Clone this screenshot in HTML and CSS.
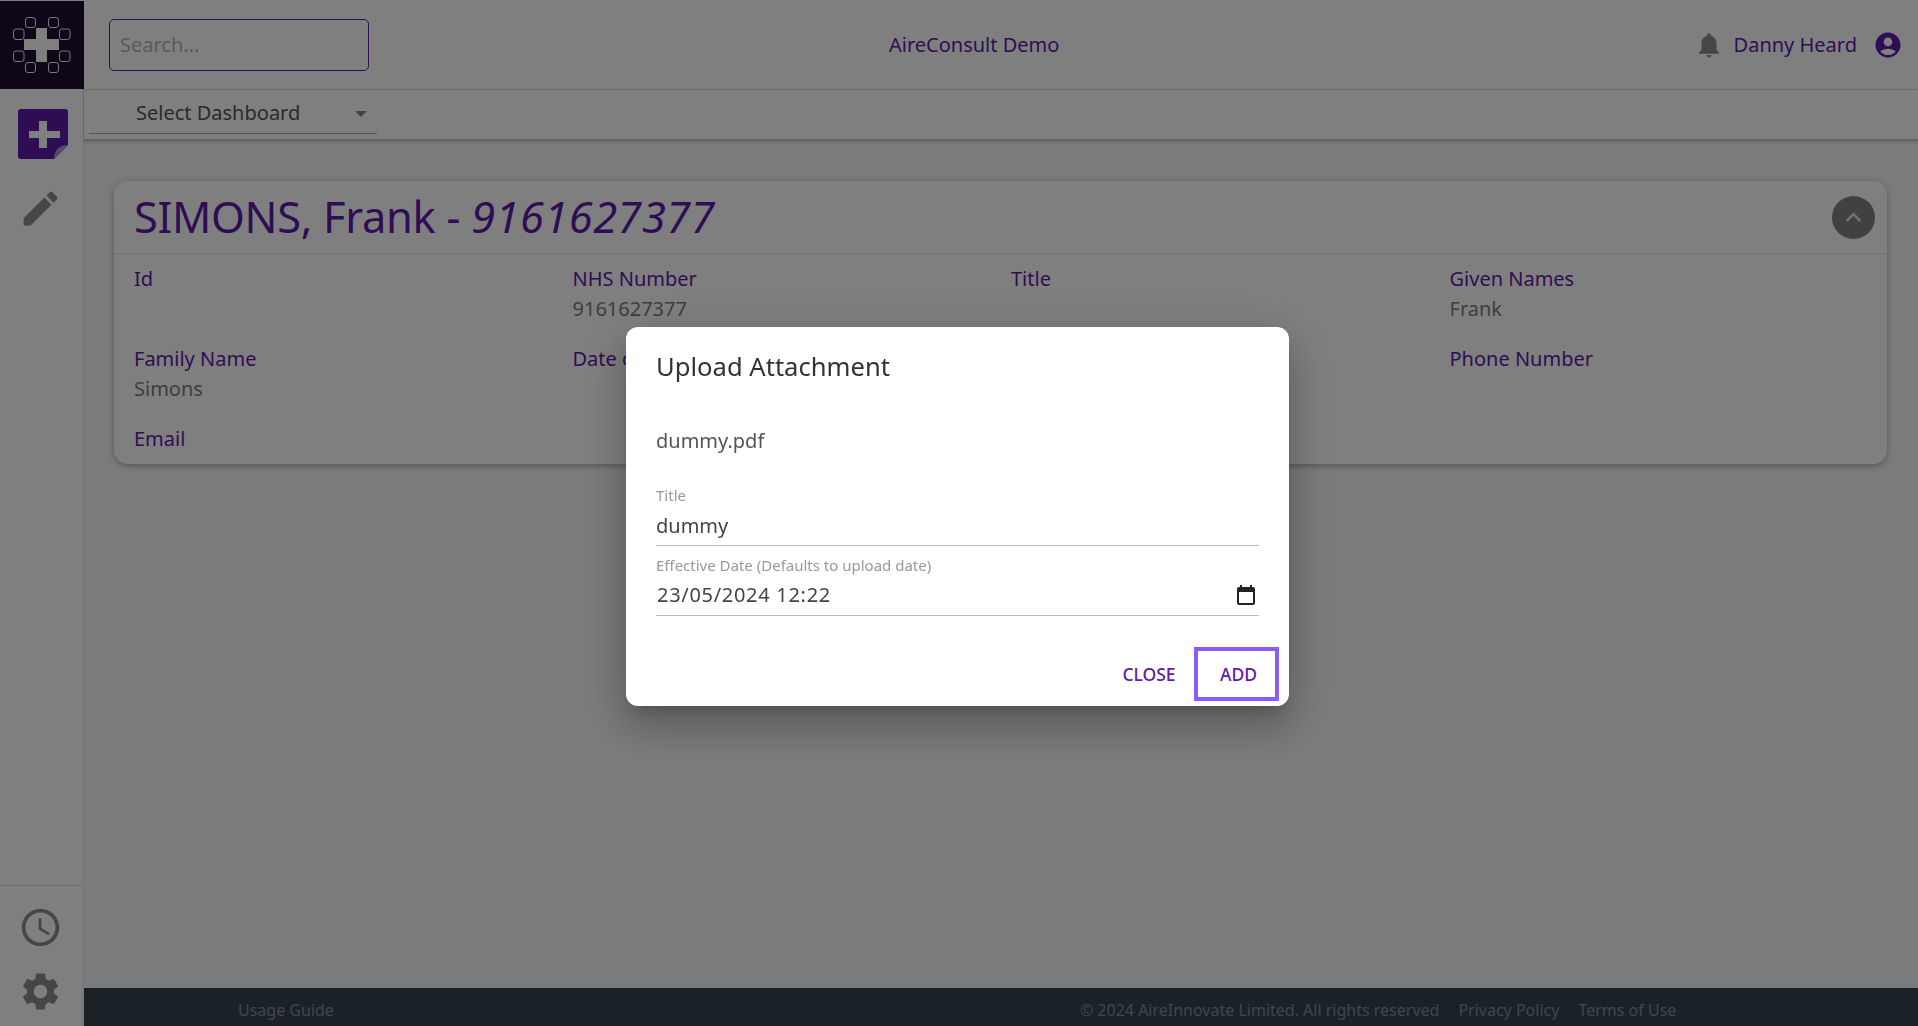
FILE: index.html
```html
<!DOCTYPE html>
<html lang="en">
<head>
<meta charset="utf-8">
<title>AireConsult Demo</title>
<link rel="stylesheet" href="styles.css">
</head>
<body>
<div class="app">
  <aside class="sidebar">
    <div class="logo">
      <svg width="84" height="88" viewBox="0 0 84 88">
        <g fill="none" stroke="#fff" stroke-width="1" stroke-opacity=".95">
          <rect x="25.5" y="16.5" width="10" height="10" rx="2.5"/>
          <rect x="48.5" y="16.5" width="10" height="10" rx="2.5"/>
          <rect x="13.5" y="28" width="10.5" height="10.5" rx="2.5"/>
          <rect x="59.5" y="28" width="10.5" height="10.5" rx="2.5"/>
          <rect x="13.5" y="50" width="10.5" height="10.5" rx="2.5"/>
          <rect x="59.5" y="50" width="10.5" height="10.5" rx="2.5"/>
          <rect x="25.5" y="61.5" width="10" height="10" rx="2.5"/>
          <rect x="48.5" y="61.5" width="10" height="10" rx="2.5"/>
        </g>
        <path fill="#fff" d="M36 27h11v11h12v11H47v12H36V49H24V38h12z"/>
      </svg>
    </div>
    <div class="side-top">
      <svg class="add-icon" width="50" height="50" viewBox="0 0 50 50">
        <path fill="#5f1aa8" d="M3 0h44a3 3 0 0 1 3 3v33L36 50H3a3 3 0 0 1-3-3V3a3 3 0 0 1 3-3z"/>
        <path fill="#fff" d="M21 12h8v10h13v7H29v10h-8V29H11v-7h10z"/>
        <path fill="#b48fe0" d="M36 50c0-9 5-14 14-14z"/>
      </svg>
      <svg class="side-icon" viewBox="0 0 24 24"><path d="M3 17.25V21h3.75L17.81 9.94l-3.75-3.75L3 17.25zM20.71 7.04c.39-.39.39-1.02 0-1.41l-2.34-2.34a.9959.9959 0 0 0-1.41 0l-1.83 1.83 3.75 3.75 1.83-1.83z"/></svg>
    </div>
    <div class="side-bottom">
      <svg class="side-icon" viewBox="0 0 24 24"><path d="M11.99 2C6.47 2 2 6.48 2 12s4.47 10 9.99 10C17.52 22 22 17.52 22 12S17.52 2 11.99 2zM12 20c-4.42 0-8-3.58-8-8s3.58-8 8-8 8 3.58 8 8-3.58 8-8 8zm.5-13H11v6l5.25 3.15.75-1.23-4.5-2.67z"/></svg>
      <svg class="side-icon" viewBox="0 0 24 24"><path d="M19.14 12.94c.04-.3.06-.61.06-.94 0-.32-.02-.64-.07-.94l2.03-1.58c.18-.14.23-.41.12-.61l-1.92-3.32c-.12-.22-.37-.29-.59-.22l-2.39.96c-.5-.38-1.03-.7-1.62-.94l-.36-2.54c-.04-.24-.24-.41-.48-.41h-3.84c-.24 0-.43.17-.47.41l-.36 2.54c-.59.24-1.13.57-1.62.94l-2.39-.96c-.22-.08-.47 0-.59.22L2.74 8.87c-.12.21-.08.47.12.61l2.03 1.58c-.05.3-.09.63-.09.94s.02.64.07.94l-2.03 1.58c-.18.14-.23.41-.12.61l1.92 3.32c.12.22.37.29.59.22l2.39-.96c.5.38 1.03.7 1.62.94l.36 2.54c.05.24.24.41.48.41h3.84c.24 0 .44-.17.47-.41l.36-2.54c.59-.24 1.13-.56 1.62-.94l2.39.96c.22.08.47 0 .59-.22l1.92-3.32c.12-.22.07-.47-.12-.61l-2.01-1.58zM12 15.6c-1.98 0-3.6-1.62-3.6-3.6s1.62-3.6 3.6-3.6 3.6 1.62 3.6 3.6-1.62 3.6-3.6 3.6z"/></svg>
    </div>
  </aside>
  <div class="content">
    <header class="topbar">
      <div class="search">Search...</div>
      <div class="app-title">AireConsult Demo</div>
      <div class="user">
        <svg class="bell" viewBox="0 0 24 24"><path d="M12 22c1.1 0 2-.9 2-2h-4c0 1.1.89 2 2 2zm6-6v-5c0-3.07-1.64-5.64-4.5-6.32V4c0-.83-.67-1.5-1.5-1.5s-1.5.67-1.5 1.5v.68C7.63 5.36 6 7.92 6 11v5l-2 2v1h16v-1l-2-2z"/></svg>
        <span class="user-name">Danny Heard</span>
        <svg class="avatar" viewBox="0 0 24 24"><path d="M12 2C6.48 2 2 6.48 2 12s4.48 10 10 10 10-4.48 10-10S17.52 2 12 2zm0 4c1.93 0 3.5 1.57 3.5 3.5S13.93 13 12 13s-3.5-1.57-3.5-3.5S10.07 6 12 6zm0 14c-2.03 0-4.43-.82-6.14-2.88C7.55 15.8 9.68 15 12 15s4.45.8 6.14 2.12C16.43 19.18 14.03 20 12 20z"/></svg>
      </div>
    </header>
    <div class="dashbar">
      <div class="select">
        <span class="select-text">Select Dashboard</span>
        <span class="select-arrow"></span>
      </div>
    </div>
    <main class="main">
      <section class="card">
        <div class="card-head">
          <h1 class="patient">SIMONS, Frank - <em>9161627377</em></h1>
          <button class="collapse" type="button" aria-label="Collapse">
            <svg viewBox="0 0 24 24"><path d="M12 8l-6 6 1.41 1.41L12 10.83l4.59 4.58L18 14z"/></svg>
          </button>
        </div>
        <div class="fields">
          <div class="field"><div class="label">Id</div></div>
          <div class="field"><div class="label">NHS Number</div><div class="value">9161627377</div></div>
          <div class="field"><div class="label">Title</div></div>
          <div class="field"><div class="label">Given Names</div><div class="value">Frank</div></div>
          <div class="field"><div class="label">Family Name</div><div class="value">Simons</div></div>
          <div class="field field-clip"><div class="label">Date of Birth</div></div>
          <div class="field"></div>
          <div class="field"><div class="label">Phone Number</div></div>
          <div class="field"><div class="label">Email</div></div>
        </div>
      </section>
    </main>
    <footer class="footer">
      <a class="foot-guide">Usage Guide</a>
      <span class="foot-copy">© 2024 AireInnovate Limited. All rights reserved</span>
      <a class="foot-link">Privacy Policy</a>
      <a class="foot-link">Terms of Use</a>
    </footer>
  </div>
</div>

<div class="overlay">
  <div class="dialog">
    <h2 class="dialog-title">Upload Attachment</h2>
    <div class="file-name">dummy.pdf</div>
    <div class="form-field form-title">
      <div class="form-label">Title</div>
      <div class="form-input">dummy</div>
    </div>
    <div class="form-field">
      <div class="form-label">Effective Date (Defaults to upload date)</div>
      <div class="form-input form-date">
        <span>23/05/2024 12:22</span>
        <svg class="cal" viewBox="0 0 24 24"><path d="M19 4h-1V2h-2v2H8V2H6v2H5c-1.1 0-2 .9-2 2v14c0 1.1.9 2 2 2h14c1.1 0 2-.9 2-2V6c0-1.1-.9-2-2-2zm0 16H5V9h14v11z"/></svg>
      </div>
    </div>
    <div class="actions">
      <button class="btn btn-close" type="button">CLOSE</button>
      <button class="btn btn-add" type="button">ADD</button>
    </div>
  </div>
</div>
</body>
</html>
```

FILE: styles.css
```css
* { box-sizing: border-box; }
html, body { margin: 0; height: 100%; overflow: hidden; }
body {
  font-family: "Noto Sans", sans-serif;
  font-size: 20px;
  color: #555;
  background: #fff;
}
.app {
  display: flex;
  height: 1026px;
  padding-top: 1px;
}
.sidebar {
  width: 84px;
  flex: none;
  display: flex;
  flex-direction: column;
  background: #fff;
  border-right: 1px solid #e4e4e4;
}
.logo {
  width: 84px;
  height: 88px;
  flex: none;
  margin-right: -1px;
  background: #1e0c30;
}
.logo svg { display: block; }
.side-top {
  flex: 1;
  display: flex;
  flex-direction: column;
  align-items: center;
  padding-top: 20px;
}
.add-icon { display: block; margin-left: 3px; }
.side-top .side-icon { margin-top: 27px; margin-left: -3px; }
.side-icon {
  display: block;
  width: 45px;
  height: 45px;
  fill: #8c8c8c;
}
.side-bottom {
  flex: none;
  height: 141px;
  border-top: 1px solid #ddd;
  display: flex;
  flex-direction: column;
  align-items: center;
  gap: 19px;
  padding: 19px 2px 0 0;
}
.content {
  flex: 1;
  min-width: 0;
  display: flex;
  flex-direction: column;
}
.topbar {
  height: 89px;
  flex: none;
  display: flex;
  align-items: center;
  padding: 0 15px 1px 25px;
  background: #fff;
  border-bottom: 1px solid #e2e2e2;
}
.search {
  width: 260px;
  height: 52px;
  border: 1px solid #5f1aa8;
  border-radius: 5px;
  padding: 0 10px;
  line-height: 50px;
  font-size: 20px;
  color: #b5b5b5;
}
.app-title {
  margin-left: 520px;
  color: #5f1aa8;
}
.user {
  margin-left: auto;
  display: flex;
  align-items: center;
}
.bell { width: 30px; height: 30px; fill: #8c8c8c; }
.user-name { margin-left: 10px; color: #5f1aa8; }
.avatar { width: 30px; height: 30px; fill: #5f1aa8; margin-left: 16px; }
.dashbar {
  height: 51px;
  flex: none;
  background: #fff;
  border-bottom: 2px solid #c8c8c8;
  box-shadow: 0 1px 3px rgba(0, 0, 0, .2);
  padding-left: 5px;
  position: relative;
}
.select {
  width: 288px;
  height: 44px;
  border-bottom: 1px solid #aaa;
  display: flex;
  align-items: center;
  padding: 1px 10px 0 47px;
  justify-content: space-between;
  color: #555;
}
.select-arrow {
  width: 0;
  height: 0;
  border-left: 6px solid transparent;
  border-right: 6px solid transparent;
  border-top: 6px solid #8a8a8a;
  margin-top: 3px;
}
.main {
  flex: 1;
  min-height: 0;
  background: #f5f6fb;
  padding: 40px 31px 0 30px;
}
.card {
  height: 283px;
  background: #fff;
  border-radius: 14px;
  box-shadow: 0 2px 6px rgba(0, 0, 0, .3);
}
.card-head {
  height: 73px;
  display: flex;
  align-items: center;
  justify-content: space-between;
  padding: 0 12px 0 20px;
  border-bottom: 1px solid #e2e2e2;
}
.patient {
  margin: 0;
  font-size: 43.4px;
  font-weight: 400;
  color: #5f1aa8;
  line-height: 72px;
  letter-spacing: -.3px;
}
.patient em { letter-spacing: .5px; }
.collapse {
  width: 43px;
  height: 43px;
  border: 0;
  padding: 6px;
  border-radius: 50%;
  background: #828282;
}
.collapse svg { display: block; width: 31px; height: 31px; fill: #e0e0e0; }
.fields {
  display: grid;
  grid-template-columns: repeat(4, 438.5px);
  grid-template-rows: 60px 60px auto;
  row-gap: 20px;
  padding: 10px 20px 0;
}
.label { color: #5f1aa8; line-height: 30px; }
.value { color: #7c7c7c; line-height: 30px; }
.field-clip { width: 53px; overflow: hidden; white-space: nowrap; }
.footer {
  height: 38px;
  flex: none;
  background: #344450;
  color: #7e8e9a;
  display: flex;
  align-items: center;
  font-size: 16px;
  padding: 6px 0 0 154px;
}
.foot-copy { margin-left: 746px; }
.foot-link { margin-left: 19px; }
.overlay {
  position: fixed;
  inset: 0;
  background: rgba(0, 0, 0, .5);
  display: flex;
  align-items: flex-start;
  justify-content: flex-start;
}
.dialog {
  width: 663px;
  height: 379px;
  margin: 327px 0 0 626px;
  background: #fff;
  border-radius: 12px;
  box-shadow: 0 11px 15px -7px rgba(0,0,0,.2), 0 24px 38px 3px rgba(0,0,0,.14), 0 9px 46px 8px rgba(0,0,0,.12);
  padding: 24px 30px 0;
  position: relative;
}
.dialog-title {
  margin: 0;
  font-size: 25.6px;
  font-weight: 400;
  line-height: 32px;
  color: #333;
}
.file-name {
  margin-top: 43px;
  line-height: 30px;
  color: #555;
}
.form-title { margin-top: 29px; }
.form-field { margin-bottom: 9px; }
.form-label {
  font-size: 15px;
  line-height: 20px;
  color: #999;
}
.form-input {
  height: 41px;
  border-bottom: 1px solid #bbb;
  line-height: 41px;
  color: #444;
}
.form-date {
  display: flex;
  align-items: center;
  justify-content: space-between;
  padding: 0 0 2px 1px;
  letter-spacing: .7px;
}
.cal { width: 24px; height: 24px; fill: #222; margin: 2px 1px 0 0; }
.actions {
  position: absolute;
  right: 10px;
  bottom: 5px;
  display: flex;
  align-items: center;
}
.btn {
  font-family: "Noto Sans", sans-serif;
  font-size: 17.5px;
  font-weight: 500;
  color: #5f1aa8;
  background: #fff;
  border: 0;
  padding: 0;
}
.btn-close { width: 54px; margin-right: 18px; }
.btn-add {
  width: 85px;
  height: 54px;
  border: 4px solid #8a5bff;
  padding: 0 0 0 22px;
  text-align: left;
}
```
